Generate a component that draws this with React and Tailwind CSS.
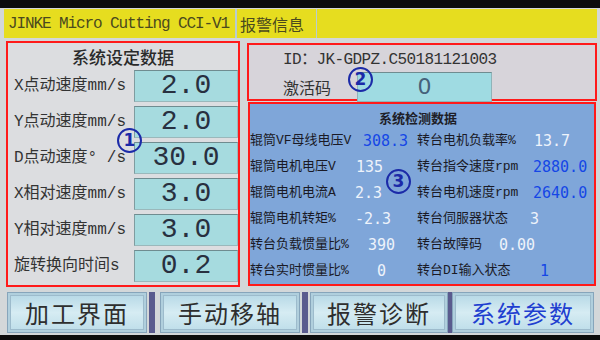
import React from "react";

const mono = "font-['Liberation_Mono','Noto_Sans_CJK_SC',monospace]";

const settings = [
  { label: "X点动速度mm/s", value: "2.0" },
  { label: "Y点动速度mm/s", value: "2.0" },
  { label: "D点动速度° /s", value: "30.0" },
  { label: "X相对速度mm/s", value: "3.0" },
  { label: "Y相对速度mm/s", value: "3.0" },
  { label: "旋转换向时间s", value: "0.2" },
];

// each value carries its own offset inside the value column
const monitor = [
  ["辊筒VF母线电压V", "308.3", "pl-[8px] text-[#1546e6]", "转台电机负载率%", "13.7", "pl-[35px] text-[#eef3fb]"],
  ["辊筒电机电压V", "135", "pl-[1px] text-[#eef3fb]", "转台指令速度rpm", "2880.0", "pl-[34px] text-[#1546e6]"],
  ["辊筒电机电流A", "2.3", "pl-[0px] text-[#eef3fb]", "转台电机速度rpm", "2640.0", "pl-[34px] text-[#1546e6]"],
  ["辊筒电机转矩%", "-2.3", "pl-[0px] text-[#eef3fb]", "转台伺服器状态", "3", "pl-[31px] text-[#eef3fb]"],
  ["转台负载惯量比%", "390", "pl-[13px] text-[#eef3fb]", "转台故障码", "0.00", "pl-[0px] text-[#eef3fb]"],
  ["转台实时惯量比%", "0", "pl-[22px] text-[#eef3fb]", "转台DI输入状态", "1", "pl-[41px] text-[#1546e6]"],
];

const tabs = [
  { name: "加工界面", w: "w-[140px]" },
  { name: "手动移轴", w: "w-[140px]" },
  { name: "报警诊断", w: "w-[138px]" },
  { name: "系统参数", w: "w-[142px]", active: true },
];

function Mark({ n, className }) {
  return (
    <div
      className={`absolute w-[25px] h-[25px] rounded-full border-2 border-[#1b2aa8] text-[#1b2aa8] flex items-center justify-center text-[17px] font-bold leading-none font-['DejaVu_Sans',sans-serif] ${className}`}
    >
      {n}
    </div>
  );
}

function Tab({ name, w, active }) {
  return (
    <div className={`${w} h-full border border-[#86a5bb] p-[2px] bg-[#b0cfdd]`}>
      <div className="h-full border border-[#9dbbcc] bg-gradient-to-b from-[#b9dae7] via-[#d6ecf3] to-[#c0dfea] flex items-center justify-center">
        <span
          className={`text-[24px] tracking-[2px] leading-none font-['Noto_Sans_CJK_SC',sans-serif] ${
            active ? "text-[#1f3fd0]" : "text-[#2e2e2e]"
          }`}
        >
          {name}
        </span>
      </div>
    </div>
  );
}

export default function App() {
  return (
    <div className="w-[600px] h-[340px] bg-[#0c0c0c] overflow-hidden flex flex-col">
      <div className="h-[8px] shrink-0" />
      <div className="h-[327px] shrink-0 bg-[#d3d7d9] flex flex-col">
        {/* header */}
        <div className="mt-[1px] ml-[4px] mr-[3px] h-[29px] flex bg-[#e6dd1f] text-[#4b4a1e]">
          <div className={`w-[231px] pl-[4px] flex items-center text-[16px] tracking-[-1.1px] ${mono}`}>
            JINKE Micro Cutting CCI-V1
          </div>
          <div className="w-[2px] bg-[#b8ccd2]" />
          <div className="w-[79px] pl-[3px] flex items-center text-[16px] font-['Noto_Sans_CJK_SC',sans-serif]">
            报警信息
          </div>
          <div className="w-[1px] bg-[#b8ccd2]" />
          <div className="flex-1" />
        </div>

        {/* main */}
        <div className="mt-[3px] h-[247px] flex pl-[6px]">
          <div className="relative w-[234px] h-[246px] border-2 border-[#ff1a1a] bg-[#dcdde0] flex flex-col">
            <div className="h-[27px] flex items-center justify-center text-[17px] font-medium text-[#2a2a2a] font-['Noto_Sans_CJK_SC',sans-serif]">
              系统设定数据
            </div>
            <div className="flex flex-col gap-[4px]">
              {settings.map((s) => (
                <div key={s.label} className="h-[32px] flex items-center justify-between pl-[6px]">
                  <span className={`text-[16px] text-[#333] whitespace-nowrap ${mono}`}>{s.label}</span>
                  <div className="w-[104px] h-full bg-[#a6dbdf] border border-[#9ab8bb] border-t-[#6f8c90] border-l-[#7f9ca0] flex items-center justify-center">
                    <span className="text-[28px] leading-none text-[#283040] font-['Liberation_Mono',monospace]">
                      {s.value}
                    </span>
                  </div>
                </div>
              ))}
            </div>
            <Mark n="1" className="left-[109px] top-[85px]" />
          </div>

          <div className="ml-[7px] w-[350px] flex flex-col">
            <div className="relative mt-[2px] h-[58px] border-2 border-[#ff1a1a] bg-[#d7d4da] pl-[34px] pt-[5px]">
              <div className={`h-[20px] flex items-center text-[16px] tracking-[-0.6px] text-[#333] ${mono}`}>
                ID：JK-GDPZ.C50181121003
              </div>
              <div className="mt-[2px] h-[30px] flex items-center">
                <span className="w-[74px] text-[16px] text-[#333] font-['Noto_Sans_CJK_SC',sans-serif]">激活码</span>
                <div className="w-[135px] h-full bg-[#9fdbe2] border border-[#8fb3b8] border-t-[#6f8c90] flex items-center justify-center">
                  <span className="text-[22px] leading-none text-[#46617a] font-['DejaVu_Sans',sans-serif]">0</span>
                </div>
              </div>
              <Mark n="2" className="left-[99px] top-[22px]" />
            </div>

            <div className="relative mt-[1px] mx-[1px] h-[184px] border-2 border-[#ff1a1a] bg-[#7fa6d9] flex flex-col">
              <div className="mt-[4px] h-[20px] flex items-center justify-center pr-[8px] text-[13px] font-bold text-[#1e1e28] font-['Noto_Sans_CJK_SC',sans-serif]">
                系统检测数据
              </div>
              <div className="grid grid-cols-[105px_62px_82px_1fr]">
                {monitor.map((r) => (
                  <React.Fragment key={r[0]}>
                    <div className={`h-[26px] flex items-center text-[13px] text-[#1a1a26] whitespace-nowrap ${mono}`}>{r[0]}</div>
                    <div className={`h-[26px] flex items-center text-[15px] leading-none whitespace-nowrap font-['DejaVu_Sans_Mono',monospace] ${r[2]}`}>
                      {r[1]}
                    </div>
                    <div className={`h-[26px] flex items-center text-[13px] text-[#1a1a26] whitespace-nowrap ${mono}`}>{r[3]}</div>
                    <div className={`h-[26px] flex items-center text-[15px] leading-none whitespace-nowrap font-['DejaVu_Sans_Mono',monospace] ${r[5]}`}>
                      {r[4]}
                    </div>
                  </React.Fragment>
                ))}
              </div>
              <Mark n="3" className="left-[136px] top-[65px]" />
            </div>
          </div>
        </div>

        {/* tabs */}
        <div className="mt-[4px] h-[41px] flex pl-[7px]">
          <Tab {...tabs[0]} />
          <div className="ml-[2px] mr-[5px] w-[6px] bg-[#5a5b8e]" />
          <Tab {...tabs[1]} />
          <div className="ml-[2px] mr-[2px] w-[6px] bg-[#5a5b8e]" />
          <Tab {...tabs[2]} />
          <div className="w-[4px] bg-[#5a5b8e]" />
          <Tab {...tabs[3]} />
        </div>
      </div>
    </div>
  );
}
